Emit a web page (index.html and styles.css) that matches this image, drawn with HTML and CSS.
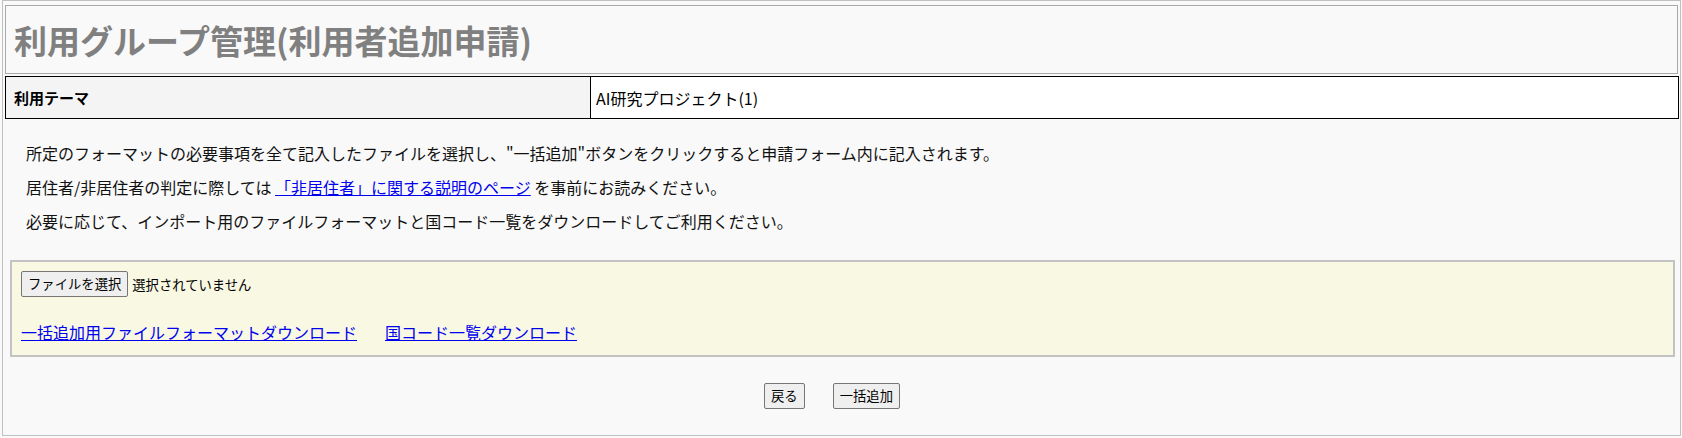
FILE: index.html
```html
<!DOCTYPE html>
<html lang="ja">
<head>
<meta charset="utf-8">
<title>利用グループ管理(利用者追加申請)</title>
<link rel="stylesheet" href="styles.css">
</head>
<body>
<div class="page">
  <div class="title-box">
    <h1 class="title">利用グループ管理(利用者追加申請)</h1>
  </div>
  <table class="info">
    <tr>
      <th class="info-label">利用テーマ</th>
      <td class="info-value">AI研究プロジェクト(1)</td>
    </tr>
  </table>
  <div class="notes">
    <p class="note">所定のフォーマットの必要事項を全て記入したファイルを選択し、"一括追加"ボタンをクリックすると申請フォーム内に記入されます。</p>
    <p class="note">居住者/非居住者の判定に際しては <a class="link" href="#">「非居住者」に関する説明のページ</a> を事前にお読みください。</p>
    <p class="note">必要に応じて、インポート用のファイルフォーマットと国コード一覧をダウンロードしてご利用ください。</p>
  </div>
  <div class="upload">
    <div class="file-row">
      <button class="btn" type="button">ファイルを選択</button>
      <span class="file-status">選択されていません</span>
    </div>
    <div class="dl-row">
      <a class="link" href="#">一括追加用ファイルフォーマットダウンロード</a>
      <a class="link" href="#">国コード一覧ダウンロード</a>
    </div>
  </div>
  <div class="actions">
    <button class="btn" type="button">戻る</button>
    <button class="btn" type="button">一括追加</button>
  </div>
</div>
</body>
</html>
```

FILE: styles.css
```css
html, body {
  margin: 0;
  padding: 0;
  background: #f9f9f9;
}
body {
  width: 1682px;
  font-family: "Noto Sans CJK JP", "Noto Sans", sans-serif;
  color: #111;
}
.page {
  margin: 0 1px 0 2px;
  border: 1px solid #c0c0c0;
  background: #f9f9f9;
  padding: 4px 1px 26px 2px;
}
.title-box {
  height: 67px;
  border: 1px solid #a9a9a9;
  background: #f9f9f9;
  display: flex;
  align-items: center;
  padding: 0 8px;
  margin-right: 1px;
}
.title {
  margin: 0;
  font-size: 33px;
  line-height: 40px;
  font-weight: 700;
  color: #808080;
}
.info {
  width: 100%;
  margin-top: 2px;
  border-collapse: collapse;
  height: 43px;
}
.info-label, .info-value {
  border: 1px solid #000;
  font-size: 15px;
  line-height: 20px;
  text-align: left;
  padding: 0;
}
.info-label {
  width: 576px;
  background: #f4f4f4;
  font-weight: 700;
  padding-left: 8px;
  color: #000;
}
.info-value {
  background: #fff;
  font-size: 16px;
  padding-left: 5px;
  color: #000;
}
.notes {
  margin-top: 22px;
  padding-left: 21px;
  display: flex;
  flex-direction: column;
  gap: 10px;
}
.note {
  margin: 0;
  font-size: 16px;
  line-height: 24px;
}
.link {
  color: #0000ee;
  text-decoration: underline;
}
.upload {
  margin: 27px 4px 0 5px;
  border: 2px solid #c3c3c3;
  background: #f8f8e3;
  padding: 9px 9px 11px 9px;
}
.file-row {
  display: flex;
  align-items: center;
  gap: 4px;
}
.file-status {
  font-size: 13.33px;
  color: #000;
}
.dl-row {
  margin-top: 23px;
  display: flex;
  gap: 28px;
  font-size: 16px;
  line-height: 24px;
}
.btn {
  font-family: "Noto Sans CJK JP", "Noto Sans", sans-serif;
  font-size: 13.33px;
  line-height: 18px;
  padding: 3px 6px;
  border: 1px solid #767676;
  border-radius: 2px;
  background: #efefef;
  color: #000;
  margin: 0;
}
.actions {
  margin-top: 26px;
  display: flex;
  justify-content: center;
  gap: 28px;
  padding-right: 20px;
}
```
